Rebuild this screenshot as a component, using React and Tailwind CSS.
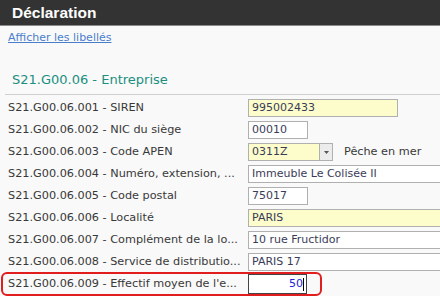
import React from "react";

const rows = [
  { label: "S21.G00.06.001 - SIREN", value: "995002433", w: "w-[150px]", yellow: true },
  { label: "S21.G00.06.002 - NIC du siège", value: "00010", w: "w-[60px]" },
  { label: "S21.G00.06.003 - Code APEN", value: "0311Z", combo: true },
  { label: "S21.G00.06.004 - Numéro, extension, ...", value: "Immeuble Le Colisée II", w: "w-[200px]" },
  { label: "S21.G00.06.005 - Code postal", value: "75017", w: "w-[60px]" },
  { label: "S21.G00.06.006 - Localité", value: "PARIS", w: "w-[200px]", yellow: true },
  { label: "S21.G00.06.007 - Complément de la lo...", value: "10 rue Fructidor", w: "w-[200px]" },
  { label: "S21.G00.06.008 - Service de distributio...", value: "PARIS 17", w: "w-[200px]" },
];

export default function App() {
  const font = { fontFamily: '"DejaVu Sans", Verdana, sans-serif' };
  return (
    <div className="w-[440px] h-[296px] overflow-hidden bg-[#f9f9f9] text-[#383838]" style={font}>
      <div className="h-[26px] bg-[#333333] border-b border-[#8a8a8a] flex items-center pl-[12px]">
        <span
          className="text-white font-bold text-[15.5px] leading-none"
          style={{ fontFamily: '"Liberation Sans", Arial, sans-serif' }}
        >
          Déclaration
        </span>
      </div>
      <div className="pl-[8px] pt-[5px]">
        <a className="text-[#4a7ecb] underline text-[11px] leading-[14px] block">Afficher les libellés</a>
      </div>
      <div className="pl-[12px] mt-[27px] text-[#1a8f80] text-[13px] leading-[16px]">S21.G00.06 - Entreprise</div>
      <div className="ml-[5px] mt-[6px] border-t border-[#cfcfcf]" />
      <div className="pt-[4px] flex flex-col gap-[4px]">
        {rows.map((r, i) => (
          <div key={i} className="flex items-center h-[18px]">
            <div className="w-[248px] shrink-0 pl-[8px] text-[11.25px] whitespace-nowrap">{r.label}</div>
            {r.combo ? (
              <div className="flex items-center">
                <div className="flex h-[18px] border border-[#b0b0b0]">
                  <div className="w-[70px] bg-[#fdfdcc] text-[11px] text-[#3b3b58] pl-[3px] leading-[16px]">{r.value}</div>
                  <div className="w-[13px] border-l border-[#b0b0b0] bg-[#ececec] flex items-center justify-center">
                    <svg width="5" height="3" viewBox="0 0 5 3"><path d="M0 0h5L2.5 3z" fill="#555" /></svg>
                  </div>
                </div>
                <span className="ml-[11px] text-[11.25px]">Pêche en mer</span>
              </div>
            ) : (
              <div className={`${r.w} shrink-0 h-[18px] border border-[#b0b0b0] ${r.yellow ? "bg-[#fdfdcc]" : "bg-white"} text-[11px] text-[#3b3b58] pl-[3px] leading-[16px] whitespace-nowrap overflow-hidden`}>
                {r.value}
              </div>
            )}
          </div>
        ))}
        <div className="flex items-center h-[18px] relative">
          <div className="absolute left-[1px] top-[-3px] w-[321px] h-[24px] border-2 border-[#e21d1d] rounded-[6px]" />
          <div className="w-[248px] shrink-0 pl-[8px] text-[11.25px] whitespace-nowrap">S21.G00.06.009 - Effectif moyen de l'e...</div>
          <div className="w-[59px] h-[20px] border border-[#444] bg-white text-[11px] text-[#2222dd] pr-[2px] leading-[18px] text-right">
            50<span className="inline-block w-px h-[13px] bg-black align-middle" />
          </div>
        </div>
      </div>
    </div>
  );
}
